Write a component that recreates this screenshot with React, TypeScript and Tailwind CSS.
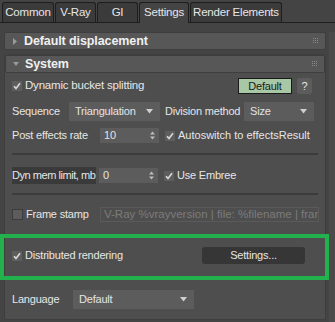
import React from 'react';

const FONT = { fontFamily: '"Liberation Sans", Arial, sans-serif' };

function Grip() {
  return (
    <svg width="6" height="6" viewBox="0 0 6 6" className="fill-[#8a8a8a]">
      {[0, 2, 4].map((y) => [0, 2, 4].map((x) => <rect key={`${x}-${y}`} x={x} y={y} width="1" height="1" />))}
    </svg>
  );
}

function Check({ checked = true }: { checked?: boolean }) {
  if (!checked) {
    return <span className="inline-block h-[11px] w-[11px] shrink-0 border border-[#3c3c3c] bg-[#5c5c5c]" />;
  }
  return (
    <span className="inline-flex h-[10px] w-[10px] shrink-0 items-center justify-center bg-[#5e5e5e]">
      <svg width="8" height="8" viewBox="0 0 8 8">
        <path d="M1 4.2 L3 6.4 L7 1.2" stroke="#d8d8d8" strokeWidth="1.6" fill="none" />
      </svg>
    </span>
  );
}

function Dropdown({ value, w }: { value: string; w: string }) {
  return (
    <div className={`flex h-[19px] shrink-0 items-center justify-between bg-[#5c5c5c] pl-[6px] pr-[7px] text-[#e4e4e4] ${w}`}>
      <span>{value}</span>
      <svg width="7" height="5" viewBox="0 0 7 5">
        <path d="M0 0 H7 L3.5 4.5 Z" fill="#cfcfcf" />
      </svg>
    </div>
  );
}

function Spinner({ value }: { value: string }) {
  return (
    <div className="flex h-[15px] w-[59px] shrink-0 items-center justify-between bg-[#5c5c5c] pl-[4px] pr-[4px] text-[#e4e4e4]">
      <span>{value}</span>
      <svg width="5" height="9" viewBox="0 0 5 9">
        <path d="M0 3.5 L2.5 0.5 L5 3.5 Z M0 5.5 L2.5 8.5 L5 5.5 Z" fill="#bdbdbd" />
      </svg>
    </div>
  );
}

function Header({ title, open }: { title: string; open?: boolean }) {
  return (
    <div className="flex h-[18px] items-center rounded-[2px] border border-[#3e3e3e] bg-[#575757] pl-[7px] pr-[6px]">
      <svg width="6" height="7" viewBox="0 0 6 7" className="mr-[6px]">
        {open ? <path d="M0 1 H6 L3 5 Z" fill="#9a9a9a" /> : <path d="M1 0 V7 L5 3.5 Z" fill="#9a9a9a" />}
      </svg>
      <span className="flex-1 text-[12.5px] font-bold tracking-[-0.1px] text-[#f0f0f0]">{title}</span>
      <Grip />
    </div>
  );
}

const tabs = ['Common', 'V-Ray', 'GI', 'Settings', 'Render Elements'];
const tabW = ['w-[52px]', 'w-[41px]', 'w-[41px]', 'w-[50px]', 'w-[92px]'];

export default function App() {
  return (
    <div
      style={FONT}
      className="relative h-[322px] w-[335px] overflow-hidden whitespace-nowrap bg-[#444444] text-[11px] tracking-[-0.2px] text-[#e6e6e6]"
    >
      <div className="flex h-[23px] items-end gap-[1px] border-b border-[#1e1e1e] pl-[2px] text-[11.5px]">
        {tabs.map((t, i) => (
          <div
            key={t}
            className={`flex shrink-0 items-center justify-center rounded-t-[3px] border border-b-0 border-[#1e1e1e] ${tabW[i]} ${
              t === 'Settings' ? '-mb-px h-[21px] bg-[#444444]' : 'h-[20px] bg-[#3b3b3b]'
            }`}
          >
            {t}
          </div>
        ))}
      </div>

      <div className="flex pl-[4px] pt-[9px]">
        <div className="flex w-[322px] shrink-0 flex-col gap-[4px]">
          <Header title="Default displacement" />
          <div className="rounded-[2px] border border-[#3e3e3e] bg-[#4e4e4e]">
            <Header title="System" open />
            <div className="px-[7px]">
              <div className="mt-[5px] flex h-[16px] items-center">
                <Check />
                <span className="ml-[3px] flex-1 text-[11.5px]">Dynamic bucket splitting</span>
                <div className="flex h-[16px] w-[54px] shrink-0 items-center justify-center border border-[#1a1a1a] bg-[#a8c7a5] text-[#202020]">
                  Default
                </div>
                <div className="ml-[5px] flex h-[16px] w-[15px] shrink-0 items-center justify-center rounded-[2px] bg-[#5c5c5c]">?</div>
                <div className="w-[6px] shrink-0" />
              </div>
              <div className="mt-[8px] flex h-[19px] items-center">
                <span className="w-[57px] shrink-0">Sequence</span>
                <Dropdown value="Triangulation" w="w-[91px]" />
                <span className="ml-[5px] w-[79px] shrink-0">Division method</span>
                <Dropdown value="Size" w="w-[70px]" />
              </div>
              <div className="mt-[7px] flex h-[15px] items-center">
                <span className="w-[88px] shrink-0">Post effects rate</span>
                <Spinner value="10" />
                <span className="ml-[6px] flex">
                  <Check />
                </span>
                <span className="ml-[3px] tracking-[0px]">Autoswitch to effectsResult</span>
              </div>
              <div className="mt-[10px] h-[2px] bg-[#3c3c3c]" />
              <div className="mt-[13px] flex h-[15px] items-center">
                <span className="mr-[3px] w-[84px] shrink-0 overflow-hidden bg-[#3a3a3a] tracking-[-0.45px]">Dyn mem limit, mb</span>
                <Spinner value="0" />
                <span className="ml-[6px] flex">
                  <Check />
                </span>
                <span className="ml-[3px]">Use Embree</span>
              </div>
              <div className="mt-[10px] h-[2px] bg-[#3c3c3c]" />
              <div className="mt-[12px] flex h-[15px] items-center">
                <Check checked={false} />
                <span className="ml-[3px] w-[74px] shrink-0">Frame stamp</span>
                <div className="flex h-[15px] w-[219px] shrink-0 items-center overflow-hidden border border-[#5a5a5a] bg-[#4e4e4e] pl-[3px] text-[11.5px] tracking-[0px] text-[#7c7c7c]">
                  V-Ray %vrayversion | file: %filename | frame: %frame
                </div>
              </div>
              <div className="mt-[25px] flex h-[17px] items-center">
                <Check />
                <span className="ml-[3px] w-[177px] shrink-0">Distributed rendering</span>
                <div className="flex h-[17px] w-[103px] shrink-0 items-center justify-center rounded-[3px] bg-[#363636]">Settings...</div>
              </div>
              <div className="mt-[12px] h-[2px] bg-[#3c3c3c]" />
              <div className="mt-[12px] flex h-[19px] items-center">
                <span className="w-[61px] shrink-0">Language</span>
                <Dropdown value="Default" w="w-[121px]" />
              </div>
              <div className="h-[10px]" />
            </div>
          </div>
        </div>
        <div className="ml-[3px] h-[300px] w-[6px] shrink-0 bg-[#4b4b4b]" />
      </div>

      <div className="absolute left-0 top-[234px] h-[46px] w-[329px] border-4 border-[#22b14c]" />
    </div>
  );
}
